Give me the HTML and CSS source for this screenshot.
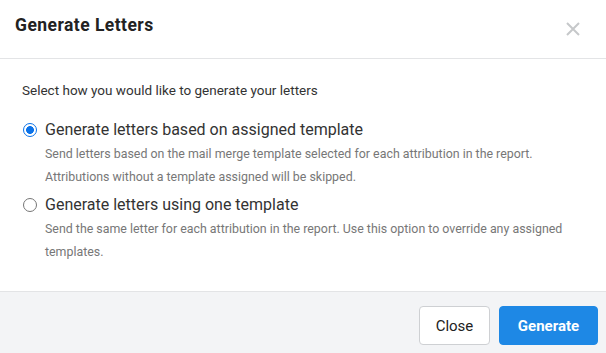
FILE: index.html
```html
<!DOCTYPE html>
<html>
<head>
<meta charset="utf-8">
<link rel="stylesheet" href="styles.css">
</head>
<body>
<div class="modal">
  <div class="modal-header">
    <h2 class="modal-title">Generate Letters</h2>
    <button class="close-x" aria-label="Close">
      <svg width="14" height="14" viewBox="0 0 14 14"><path d="M1 1L13 13M13 1L1 13" stroke="#c6c8ca" stroke-width="2" fill="none"/></svg>
    </button>
  </div>
  <div class="modal-body">
    <p class="intro">Select how you would like to generate your letters</p>
    <div class="option">
      <span class="radio checked"></span>
      <div class="option-text">
        <div class="option-label">Generate letters based on assigned template</div>
        <div class="option-desc">Send letters based on the mail merge template selected for each attribution in the report. Attributions without a template assigned will be skipped.</div>
      </div>
    </div>
    <div class="option option-second">
      <span class="radio"></span>
      <div class="option-text">
        <div class="option-label">Generate letters using one template</div>
        <div class="option-desc">Send the same letter for each attribution in the report. Use this option to override any assigned templates.</div>
      </div>
    </div>
  </div>
  <div class="modal-footer">
    <button class="btn btn-close">Close</button>
    <button class="btn btn-primary">Generate</button>
  </div>
</div>
</body>
</html>
```
FILE: styles.css
```css
* { box-sizing: border-box; }
html, body { margin: 0; padding: 0; background: #fff; }
body { font-family: Roboto, "Open Sans", sans-serif; color: #333; width: 606px; height: 353px; overflow: hidden; }
.modal { display: flex; flex-direction: column; height: 353px; }
.modal-header { height: 59px; border-bottom: 1px solid #e3e4e6; display: flex; align-items: flex-start; justify-content: space-between; padding: 15px 26px 0 15px; }
.modal-title { margin: 0; font-size: 17.5px; font-weight: 700; color: #222; line-height: 20px; letter-spacing: 0.45px; }
.close-x { border: 0; background: none; padding: 0; margin-top: 7px; width: 14px; height: 14px; display: block; }
.close-x svg { display: block; }
.modal-body { flex: 1; padding: 21px 36px 0 22px; }
.intro { margin: 0 0 17px; font-size: 13.5px; line-height: 20px; color: #333; }
.option { display: flex; align-items: flex-start; gap: 8px; margin-left: 1px; }
.option-second { margin-top: 3px; }
.radio { width: 14px; height: 14px; border-radius: 50%; border: 1px solid #767676; margin-top: 6px; flex: none; background: #fff; }
.radio.checked { border: 1.5px solid #0b72e8; background: radial-gradient(circle, #0b72e8 0 3.6px, #fff 4.2px); }
.option-label { font-size: 16px; line-height: 25px; color: #333; }
.option-desc { font-size: 12.4px; line-height: 23.4px; color: #777; }
.modal-footer { height: 62px; flex: none; background: #f3f4f6; border-top: 1px solid #e3e4e6; display: flex; justify-content: flex-end; align-items: flex-start; gap: 9px; padding: 14px 8px 0 0; }
.btn { height: 39px; border-radius: 4px; font-family: inherit; font-size: 15px; padding: 0; }
.btn-close { width: 71px; background: #fff; border: 1px solid #ced0d3; color: #222; }
.btn-primary { width: 99px; background: #1e88e5; border: 1px solid #1e88e5; color: #fff; font-weight: 700; }
```
